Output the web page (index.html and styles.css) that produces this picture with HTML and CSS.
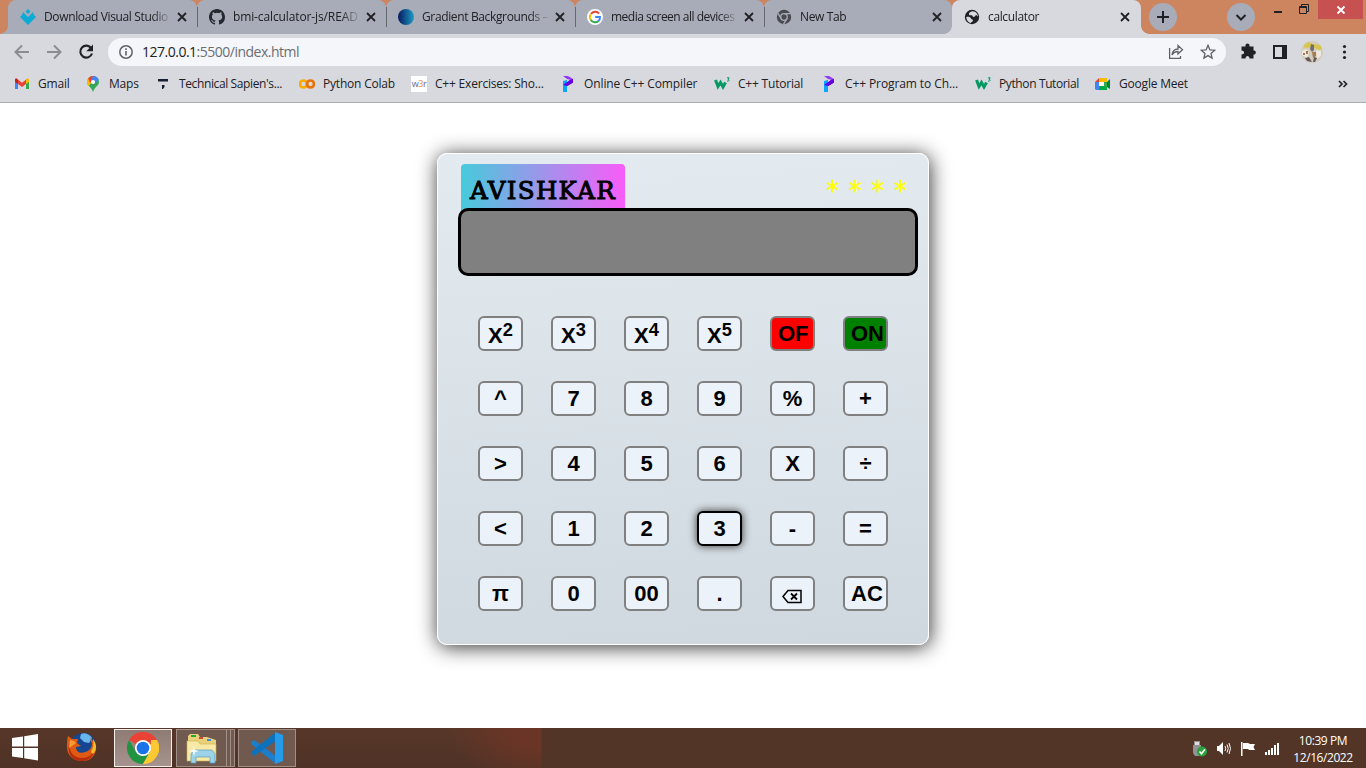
FILE: index.html
```html
<!DOCTYPE html>
<html lang="en">
<head>
<meta charset="utf-8">
<title>calculator</title>
<link rel="stylesheet" href="styles.css">
</head>
<body>
<svg class="defs" width="0" height="0">
  <symbol id="close" viewBox="0 0 16 16"><path d="M4 4l8 8M12 4l-8 8" stroke="#202124" stroke-width="1.8" fill="none"/></symbol>
  <symbol id="programiz" viewBox="0 0 16 16"><path d="M3 0h5l5 3-2 1-4-1z" fill="#8e3cf7"/><path d="M13 3v3.500L7.500 10H3V7l5-1 2-2z" fill="#6500e5"/><path d="M3 5l4-1v12H3z" fill="#0aa5ff"/><path d="M3 9l7-5 3-1v3.500L7 10z" fill="#6500e5"/></symbol>
  <symbol id="w3" viewBox="0 0 16 16"><path d="M1.500 4l2.500 6.500 2.500-4 2.500 4.500 2.500-4.500" fill="none" stroke="#059862" stroke-width="3"/><path d="M13 1.800h2.200l-1.200 1.500c1.700 0 1.400 2.600-1 1.700" fill="none" stroke="#059862"/></symbol>
</svg>
<header class="browser">
  <div class="tabstrip">
    <div class="tab first"><svg class="fav" viewBox="0 0 16 16"><path d="M8 0l2.500 2.500L8 5 5.500 2.500zM3 3l2.500 2.500L8 8l2.500-2.500L13 3l1 3 2 2-8 8-8-8 2-2z" fill="#0caad5"/></svg><span class="label">Download Visual Studio</span><svg class="x"><use href="#close"/></svg></div>
    <div class="tab"><svg class="fav" viewBox="0 0 16 16"><path fill="#24292f" d="M8 0C3.580 0 0 3.580 0 8c0 3.540 2.290 6.530 5.470 7.590.4.070.55-.17.55-.38v-1.490c-2.010.37-2.530-.49-2.690-.94-.09-.23-.48-.94-.82-1.130-.28-.15-.68-.52-.01-.53.63-.01 1.080.58 1.230.82.72 1.210 1.870.87 2.330.66.07-.52.28-.87.51-1.070-1.780-.2-3.640-.89-3.640-3.950 0-.87.31-1.590.82-2.150-.08-.2-.36-1.020.08-2.120 0 0 .67-.21 2.200.82a7.600 7.600 0 014 0c1.530-1.040 2.200-.82 2.200-.82.44 1.100.16 1.920.08 2.120.51.56.82 1.270.82 2.150 0 3.070-1.870 3.750-3.650 3.950.29.25.54.73.54 1.480v2.200c0 .21.15.46.55.38A8 8 0 0016 8c0-4.420-3.580-8-8-8z"/></svg><span class="label wide">bmi-calculator-js/READ</span><svg class="x"><use href="#close"/></svg></div>
    <div class="tab"><span class="fav orb"></span><span class="label">Gradient Backgrounds –</span><svg class="x"><use href="#close"/></svg></div>
    <div class="tab"><svg class="fav" viewBox="0 0 16 16"><circle cx="8" cy="8" r="8" fill="#fff"/><g fill="none" stroke-width="2"><path d="M12 4.500A5 5 0 004 5" stroke="#ea4335"/><path d="M3.700 5.300a5 5 0 000 5.400" stroke="#fbbc05"/><path d="M3.700 10.700A5 5 0 0011.500 12" stroke="#34a853"/><path d="M11.500 12A5 5 0 0013 8.100H8.200" stroke="#4285f4"/></g></svg><span class="label tight">media screen all devices</span><svg class="x"><use href="#close"/></svg></div>
    <div class="tab last"><svg class="fav" viewBox="0 0 16 16"><circle cx="8" cy="8" r="7.200" fill="#484b50"/><circle cx="8" cy="8" r="3.300" fill="none" stroke="#a8abb8" stroke-width="1.300"/><path d="M8 4.700h6.400M5.200 9.700L2 4.300M10.800 9.600l-3.200 5.500" stroke="#a8abb8" stroke-width="1.300"/></svg><span class="label">New Tab</span><svg class="x"><use href="#close"/></svg></div>
    <div class="tab active"><svg class="fav" viewBox="0 0 16 16"><circle cx="8" cy="8" r="7.200" fill="#202124"/><path d="M8.500 2.200C6 2.500 4.500 4 5 5.500s3 0 3.500 1.500S11 8 11.500 6.500s2 .5 2.500 1C14 5 11.500 2 8.500 2.200zM2.300 8C4 7.500 6.500 8 7 9.500s2 .5 2 2-2 1-2 2.500C4.500 13.800 2.300 11 2.300 8z" fill="#d8d9df"/></svg><span class="label">calculator</span><svg class="x"><use href="#close"/></svg></div>
    <span class="round"><svg width="28" height="28"><path d="M8 14h12M14 8v12" stroke="#202124" stroke-width="2"/></svg></span>
    <span class="round chev"><svg width="28" height="28"><path d="M9.500 12l4.500 4.500 4.500-4.500" fill="none" stroke="#202124" stroke-width="2"/></svg></span>
    <svg class="winctl" width="58" height="19"><path d="M6 12h8" stroke="#202124" stroke-width="2"/><path d="M31.500 6.500h7v7h-7zM31 7.500h8M33.500 6V4.500h7v7H39" fill="none" stroke="#202124"/></svg>
    <span class="winclose"><svg width="10" height="10"><path d="M1.500 1.500l7 7M8.500 1.500l-7 7" stroke="#fff" stroke-width="1.800"/></svg></span>
  </div>
  <div class="toolbar">
    <svg width="100" height="36"><g fill="none" stroke="#8b8d93" stroke-width="2"><path d="M29 18H16M22 11.500L15.500 18l6.500 6.500"/><path d="M47 18h13M54 11.500l6.500 6.500-6.500 6.500"/></g><path d="M91.300 14.300A6 6 0 1092 19.500" fill="none" stroke="#202124" stroke-width="2.100"/><path d="M93 10.500v6.700h-6.700z" fill="#202124"/></svg>
    <div class="omnibox">
      <svg width="16" height="16"><circle cx="8" cy="8" r="6.200" fill="none" stroke="#5f6368" stroke-width="1.500"/><path d="M8 7v4.500M8 4.300v1.700" stroke="#5f6368" stroke-width="1.600"/></svg>
      <span class="url"><b>127.0.0.1</b>:5500/index.html</span>
      <svg class="omni-icons" width="52" height="18" fill="none" stroke="#5f6368" stroke-width="1.300"><path d="M1.600 5v10.400H12.500V13M4 12c.5-4 2.500-6 6-6V2.500l4.500 4.300L10 11V8.500c-3 0-4.500 1-6 3.500z"/><path d="M40 2.300l1.900 4.500 4.800.4-3.700 3.200 1.100 4.700-4.100-2.500-4.100 2.500 1.100-4.700-3.700-3.200 4.800-.4z"/></svg>
    </div>
    <svg width="130" height="36"><path d="M5 13h4c-.8-4 4.800-4 4 0h4v4c3.200-.8 3.200 4.500 0 4v4h-4c0-3.500-4-3.500-4 0H5v-4c3.500 0 3.500-4 0-4z" fill="#202124" transform="translate(.5 -.5)"/><path d="M38 12h12v12H38z" fill="none" stroke="#202124" stroke-width="2"/><path d="M46 12h5v12h-5z" fill="#202124"/><g><circle cx="76" cy="18" r="11" fill="#d3ccbc"/><path d="M67 12l5-4 5 2 7 1 2 4-4 1-5-3-8 1z" fill="#d6c74c"/><path d="M66 17l4-2 3 3-2 6-5-3zM80 16l5 1v5l-4 3z" fill="#eee9df"/><path d="M75 10l3 1v5l-2 2-2-3z" fill="#776d70"/><path d="M69 24l4-1 3 5-5-1zM78 23l3 1-2 4h-2z" fill="#665858"/><path d="M76 18h4v4l-3 2zM70 17h2v3h-2zM67 19h2v2h-2z" fill="#a67a55"/></g><g fill="#202124"><circle cx="108.500" cy="12.500" r="1.600"/><circle cx="108.500" cy="18" r="1.600"/><circle cx="108.500" cy="23.500" r="1.600"/></g></svg>
  </div>
  <nav class="bookmarks">
    <a><svg viewBox="0 0 16 16"><path d="M1 3v10h3V6z" fill="#4285f4"/><path d="M12 6v7h3V3z" fill="#34a853"/><path d="M1 3.500L2.500 2.500 8 6.700l5.500-4.200L12 8l-4 3-4-3z" fill="#ea4335"/><path d="M1 3.500c0-1 1-1.500 2-.7L4 4v4L1 6z" fill="#c5221f"/><path d="M15 3.500c0-1-1-1.500-2-.7L12 4v4l3-2z" fill="#fbbc04"/></svg>Gmail</a>
    <a><svg viewBox="0 0 16 16"><path d="M8 0a6 6 0 00-6 6c0 4 4 4 6 10 2-6 6-6 6-10a6 6 0 00-6-6z" fill="#34a853"/><path d="M2 6a6 6 0 012-4.500L7 6l-3.500 4C2.500 8.800 2 8 2 6z" fill="#fbbc04"/><path d="M3.200 2.400A6 6 0 018 0l1 2-4 5z" fill="#ea4335"/><path d="M8 0c3 0 5 1.500 5.700 4L9 8 6 5z" fill="#4285f4"/><circle cx="8" cy="6" r="2.100" fill="#fff"/></svg>Maps</a>
    <a class="snug"><svg viewBox="0 0 16 16"><path d="M3 3h10v2.500H3zM7 9h2.500v2l-1.500 2H7z" fill="#162033"/></svg>Technical Sapien's...</a>
    <a><svg viewBox="0 0 16 16"><g fill="none" stroke-width="2.700"><circle cx="4.500" cy="8" r="3.500" stroke="#f9ab00"/><circle cx="11.500" cy="8" r="3.500" stroke="#e8710a"/></g></svg>Python Colab</a>
    <a><span class="w3r">w<i>3</i>r</span>C++ Exercises: Sho...</a>
    <a class="loose"><svg><use href="#programiz"/></svg>Online C++ Compiler</a>
    <a><svg><use href="#w3"/></svg>C++ Tutorial</a>
    <a class="loose"><svg><use href="#programiz"/></svg>C++ Program to Ch...</a>
    <a class="snug"><svg><use href="#w3"/></svg>Python Tutorial</a>
    <a><svg viewBox="0 0 16 16"><path d="M0 6l4-4v4z" fill="#ea4335"/><path d="M4 2h8v4H4z" fill="#fbbc04"/><path d="M0 6h4v8H1l-1-1z" fill="#4285f4"/><path d="M4 10h8v4H4z" fill="#00ac47"/><path d="M12 6l3-3v10l-3-2z" fill="#00832d"/><path d="M4 6h5v4H4z" fill="#fff"/><path d="M9 6h3v6l-3-2z" fill="#34a853"/></svg>Google Meet</a>
    <svg class="more" viewBox="0 0 16 16"><path d="M4 5l3 3-3 3M8.500 5l3 3-3 3" fill="none" stroke="#202124" stroke-width="1.700"/></svg>
  </nav>
</header>
<main class="page">
  <section class="calculator">
    <div class="head"><h1 class="brand">AVISHKAR</h1><span class="stars">* * * *</span></div>
    <div class="display"></div>
    <div class="keys">
      <button class="pow">X<sup>2</sup></button><button class="pow">X<sup>3</sup></button><button class="pow">X<sup>4</sup></button><button class="pow">X<sup>5</sup></button><button class="off">OF</button><button class="on">ON</button>
      <button>^</button><button>7</button><button>8</button><button>9</button><button>%</button><button>+</button>
      <button>&gt;</button><button>4</button><button>5</button><button>6</button><button>X</button><button>÷</button>
      <button>&lt;</button><button>1</button><button>2</button><button class="focus">3</button><button>-</button><button>=</button>
      <button>π</button><button>0</button><button>00</button><button>.</button><button><svg class="erase" width="20" height="15"><path d="M1 7.500L6 1.500h13v12H6z" fill="none" stroke="#000" stroke-width="1.500"/><path d="M9 4.500l6 6M15 4.500l-6 6" stroke="#000" stroke-width="1.800"/></svg></button><button>AC</button>
    </div>
  </section>
</main>
<footer class="taskbar">
  <span class="start"><svg width="27" height="27"><path d="M0 4l11-1.500V12.500H0zM12.200 2.300L26 0v12.500H12.200zM0 14h11v10L0 22.500zM12.200 14H26v12.500L12.200 24.200z" fill="#fff"/></svg></span>
  <span class="fox"><svg width="32" height="32" viewBox="0 0 32 32"><circle cx="17" cy="15" r="13" fill="#16468f"/><path d="M15 3c5-2 9 1 11 4l-3 5-5-1-4-4z" fill="#68b7ec"/><path d="M2 5l4 3 6 0-1 4 4 3-5 1c0 5 5 7 9 5 5-1 7-5 7-8l-2-6c4 3 7 8 6 12-2 8-7 11-14 11C7 30 1 24 1 16c0-4 0-8 1-11z" fill="#df5b13"/><path d="M3 13c0 8 5 14 13 14 6 0 10-3 13-8-2 7-7 11-13 11C7 30 1 24 3 13z" fill="#b52d0c"/><path d="M27 8c4 5 4 11 0 15l-2-2c2-4 3-8 2-13z" fill="#f6bb2d"/><path d="M4 9l4 1 2 2-4 3-3 2z" fill="#f49b35"/></svg></span>
  <span class="task current"><svg width="32" height="32" viewBox="0 0 32 32"><path d="M16 16L2.140 8A16 16 0 0129.860 8z" fill="#ea4335"/><path d="M16 16L29.860 8A16 16 0 0116 32l-2-1z" fill="#fbc116"/><path d="M2.140 8A16 16 0 0016 32l7-12-7 2-7-2z" fill="#229342"/><path d="M16 8h13.860L30 9 16 16z" fill="#e33b2e"/><path d="M16 32l7-12 1-12h5.860A16 16 0 0116 32z" fill="#fcc934"/><circle cx="16" cy="16" r="8" fill="#fff"/><circle cx="16" cy="16" r="6.300" fill="#1a73e8"/></svg></span>
  <span class="task folder"><svg width="32" height="32" viewBox="0 0 32 32"><path d="M2 4l2-2h8l2 3h7l9 3v19l-3 2H2z" fill="#ead078"/><path d="M1 9h11l2 3h16v17H1z" fill="#f8e9a5" stroke="#cfae4e" stroke-width=".6"/><path d="M5 3h5v2H5z" fill="#1cae36"/><path d="M13 5h4v2h-4z" fill="#cf4938"/><path d="M21 7h4v2h-4z" fill="#3d8de0"/><path d="M5 31v-9l3-4h18l3 4v9h-5v-6H10v6z" fill="#9dd3e8" stroke="#5a9dbb" stroke-width=".7"/><path d="M8 14l1 4 4 1-4 1-1 4-1-4-4-1 4-1z" fill="#fff"/></svg></span><span class="stack"></span>
  <span class="task code"><svg width="32" height="32" viewBox="0 0 32 32"><path d="M0 10l3-2 22 16v8L0 12z" fill="#1c7dcb"/><path d="M0 21l3 3L25 9V0L0 20z" fill="#0d72bb"/><path d="M24 0l8 3v26l-8 3V9z" fill="#269bea"/></svg></span>
  <span class="tray"><svg width="88" height="18" fill="#fff"><path d="M3 1h6v4h1v8l-2 3H4l-2-3V5h1z" fill="#929292"/><path d="M4 2h4v3H4z" fill="#ddd"/><circle cx="11" cy="11.500" r="5" fill="#28a33b"/><path d="M8.500 11.500l2 2.300 3.500-4.600" fill="none" stroke="#fff" stroke-width="1.600"/><path d="M26 6h2l4-4v13l-4-4h-2z"/><path d="M34 6q1.500 2.500 0 5M36 4.500q2.500 4 0 8M38 3q3 5.500 0 11" fill="none" stroke="#fff"/><path d="M50 2h1.500v14H50zM52 3h5l2 1h5l-1.500 3 1.500 3h-6l-1-1h-5z"/><path d="M74 12h2v3h-2zM77 10h2v5h-2zM80 8h2v7h-2zM83 5h2v10h-2zM86 3h2v12h-2z"/></svg></span>
  <span class="clock"><span>10:39 PM</span><span>12/16/2022</span></span>
</footer>
</body>
</html>
```
FILE: styles.css
```css
* { box-sizing: border-box; }
body { margin: 0; width: 1366px; height: 768px; display: flex; flex-direction: column; overflow: hidden; background: #fff; font-family: "Open Sans", sans-serif; font-size: 12px; color: #202124; }
svg { display: block; flex: none; }
.defs { position: absolute; }
.browser { height: 103px; background: #d8d9df; border-bottom: 1px solid #aaabb0; flex: none; }
.tabstrip { height: 34px; background: #cc855f; display: flex; padding-left: 8px; }
.tab { width: 189px; height: 34px; background: #a8abb8; border-radius: 8px 8px 0 0; display: flex; align-items: center; padding-left: 12px; position: relative; flex: none; }
.tab + .tab::before { content: ""; position: absolute; left: 0; top: 7px; width: 1px; height: 20px; background: #65676f; }
.tab.first::before { content: ""; position: absolute; left: -8px; bottom: 0; width: 8px; height: 8px; background: radial-gradient(circle at 0 0, transparent 7.500px, #a8abb8 8px); }
.tab.last { width: 188px; }
.tab.active { background: #d8d9df; z-index: 1; }
.tab.tab.active::before { left: -8px; top: 26px; width: 8px; height: 8px; background: radial-gradient(circle at 0 0, transparent 7.500px, #d8d9df 8px); }
.tab.active::after { content: ""; position: absolute; left: 189px; bottom: 0; width: 8px; height: 8px; background: radial-gradient(circle at 100% 0, transparent 7.500px, #d8d9df 8px); }
.fav { width: 16px; height: 16px; margin-right: 8px; flex: none; }
.orb { border-radius: 50%; background: linear-gradient(90deg, #071a61, #1d9bc4); }
.label { width: 126px; white-space: nowrap; letter-spacing: -.36px; -webkit-mask-image: linear-gradient(90deg, #000 108px, transparent 128px); mask-image: linear-gradient(90deg, #000 108px, transparent 128px); line-height: 20px; }
.label.tight { letter-spacing: -.5px; }
.label.wide { letter-spacing: -.12px; }
.x { width: 16px; height: 16px; margin-left: 4px; }
.last .x, .active .x { margin-left: 3px; }
.round { width: 28px; height: 28px; border-radius: 50%; background: #a8abb8; margin: 3px 0 0 8px; }
.chev { margin-left: 50px; }
.winctl { margin-left: 13px; }
.winctl + .winclose { margin-left: -8px; }
.winclose { width: 45px; height: 19px; background: #c75050; display: grid; place-items: center; }
.toolbar { height: 36px; display: flex; align-items: center; }
.omnibox { width: 1118px; height: 28px; margin-left: 8px; border-radius: 14px; background: #f5f6f9; display: flex; align-items: center; padding-left: 10px; }
.url { margin-left: 8px; font-size: 14px; color: #6b6e73; letter-spacing: -.5px; line-height: 20px; }
.url b { color: #202124; font-weight: 400; }
.omni-icons { margin-left: auto; margin-right: 6px; }
.toolbar > svg:last-child { margin-left: 10px; }
.bookmarks { height: 28px; padding-left: 14px; display: grid; grid-template-columns: 71px 70px 144px 112px 149px 154px 107px 154px 120px 240px 16px; align-items: center; letter-spacing: -.2px; }
.bookmarks a { display: flex; align-items: center; gap: 8px; white-space: nowrap; line-height: 16px; margin-top: -1px; }
.bookmarks .snug { letter-spacing: -.38px; }
.bookmarks .loose { letter-spacing: -.1px; }
.bookmarks svg { width: 16px; height: 16px; }
.w3r { width: 16px; height: 16px; background: #fff; color: #56699e; font-size: 9px; line-height: 15px; text-align: center; letter-spacing: -.4px; }
.w3r i { font-style: normal; color: #e88a4c; }
.page { flex: 1; padding-top: 50px; }
.calculator { width: 492px; height: 492px; margin-left: 437px; border: 1px solid #fff; border-radius: 10px; background: linear-gradient(176deg, #e3ebf0, #cfd8df); box-shadow: 1px 2px 20px #333; padding: 10px 10px 0 20px; }
.head { display: flex; justify-content: space-between; height: 44px; padding: 0 9px 0 3px; }
.brand { margin: 0; width: 164px; height: 48px; border-radius: 4px 4px 0 0; background: linear-gradient(90deg, #46cbdc, #f95cf9); font: 24.500px/54px "DejaVu Serif", serif; letter-spacing: 1.3px; text-align: center; -webkit-text-stroke: 1px #000; color: #000; }
.stars { color: #ff0; font: 26px/54px "DejaVu Sans Mono", monospace; letter-spacing: -4.350px; margin-right: 5px; white-space: pre; -webkit-text-stroke: .4px #ff0; }
.display { height: 68px; width: 460px; border: 3px solid #000; border-radius: 10px; background: gray; position: relative; }
.keys { display: grid; grid-template-columns: repeat(6, 45px); grid-auto-rows: 35px; gap: 30px 28px; padding: 40px 0 0 20px; }
.keys button { border: 2px solid gray; border-radius: 6px; background: #ecf2f9; font: bold 22px/25px "Liberation Sans", Arial, sans-serif; padding: 1px 6px; color: #000; text-align: center; white-space: nowrap; }
.keys .pow sup { font-size: 18.300px; line-height: 0; vertical-align: 7px; }
.keys .pow { padding-top: 5px; }
.keys .off { background: red; }
.keys .on { background: green; }
.keys .focus { border-color: #000; box-shadow: 0 0 8px #333; }
.erase { margin: 6px 0 0 4px; }
.taskbar { height: 40px; flex: none; display: flex; padding-left: 12px; background: linear-gradient(90deg, transparent 541px, #533528 542px), radial-gradient(ellipse 95px 60px at 541px 0, #6a3526 30%, transparent), linear-gradient(#573729, #4f3226); color: #fff; }
.start { width: 54px; padding-top: 6px; }
.fox { width: 48px; padding-top: 3px; }
.task { width: 58px; height: 38px; margin-top: 1px; border: 1px solid #a18f87; background: #705a50; display: grid; place-items: center; }
.task.current { background: linear-gradient(#8e7b73, #a7938e); border-color: #f2efed; }
.task.folder { width: 51px; margin-left: 4px; }
.stack { width: 8px; height: 38px; margin-top: 1px; border: 1px solid #a18f87; border-width: 1px 1px 1px 0; background: linear-gradient(90deg, #705a50 3px, #a18f87 3px, #a18f87 4px, #705a50 4px); }
.task.code { margin-left: 3px; }
.tray { margin-left: auto; padding-top: 12px; width: 89px; }
.clock { width: 86px; margin-right: 0; text-align: center; letter-spacing: -.43px; line-height: 17px; padding-top: 4px; display: flex; flex-direction: column; }
```
